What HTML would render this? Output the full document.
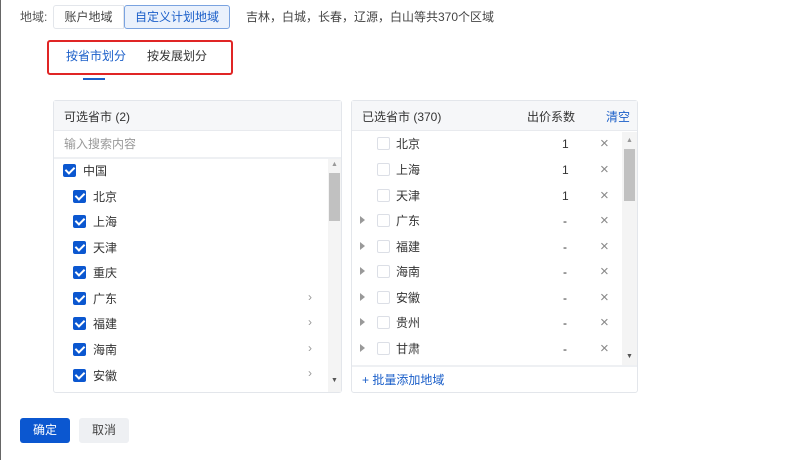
<!DOCTYPE html>
<html><head><meta charset="utf-8"><style>
*{margin:0;padding:0;box-sizing:border-box}
body{width:800px;height:460px;background:#fff;font-family:"Liberation Sans","Noto Sans CJK SC",sans-serif;font-size:12px;line-height:1.2;color:#333;position:relative;overflow:hidden}
.a{position:absolute;white-space:nowrap}
.cb{position:absolute;width:13px;height:13px;border-radius:2px;background:#0b57d0}
.cb::after{content:"";position:absolute;left:4px;top:1px;width:4px;height:7px;border:solid #fff;border-width:0 2px 2px 0;transform:rotate(45deg)}
.ecb{position:absolute;width:13px;height:13px;border:1px solid #dcdfe6;border-radius:2px;background:#fff}
.panel{position:absolute;border:1px solid #e3e6eb;border-radius:3px;background:#fff}
.hd{position:absolute;left:0;right:0;top:0;height:30px;background:#f6f7f9;border-bottom:1px solid #e8eaee}
.tri{position:absolute;width:0;height:0;border-left:5px solid #999;border-top:4px solid transparent;border-bottom:4px solid transparent}
.x{position:absolute;color:#888;font-size:15px;line-height:1}
</style></head><body>
<div class="a" style="left:0;top:0;width:1px;height:460px;background:#666"></div>
<div class="a" style="left:20px;top:10px;color:#555">地域:</div>
<div class="a" style="left:53px;top:5px;width:71px;height:24px;border:1px solid #e3e6eb;border-radius:3px 0 0 3px;text-align:center;line-height:22px;color:#444">账户地域</div>
<div class="a" style="left:124px;top:5px;width:106px;height:24px;border:1px solid #7aa3e0;background:#eaf1fc;border-radius:3px;text-align:center;line-height:22px;color:#1b5fc9">自定义计划地域</div>
<div class="a" style="left:246px;top:10px;color:#444">吉林，白城，长春，辽源，白山等共370个区域</div>
<div class="a" style="left:47px;top:40px;width:186px;height:35px;border:2px solid #e02525;border-radius:3px"></div>
<div class="a" style="left:66px;top:49px;color:#1b5fc9">按省市划分</div>
<div class="a" style="left:147px;top:49px;color:#333">按发展划分</div>
<div class="a" style="left:83px;top:78px;width:22px;height:2px;background:#1b5fc9"></div>

<div class="panel" style="left:53px;top:100px;width:289px;height:293px">
<div class="hd"></div>
<div class="a" style="left:10px;top:9px">可选省市 (2)</div>
<div class="a" style="left:10px;top:36px;color:#999">输入搜索内容</div>
<div class="a" style="left:0;right:0;top:56px;height:2px;background:#eef0f3"></div>
<div class="a" style="left:274px;top:58px;width:13px;height:233px;background:#f4f4f4"></div>
<div class="a" style="left:275px;top:72px;width:11px;height:48px;background:#c1c1c1"></div>
<div class="a" style="left:277px;top:60px;font-size:7px;color:#999">▲</div>
<div class="a" style="left:277px;top:276px;font-size:7px;color:#555">▼</div>
</div>
<div class="cb" style="left:63px;top:164px"></div><div class="a" style="left:83px;top:164px">中国</div>
<div class="cb" style="left:73px;top:190px"></div><div class="a" style="left:93px;top:190px">北京</div>
<div class="cb" style="left:73px;top:215px"></div><div class="a" style="left:93px;top:215px">上海</div>
<div class="cb" style="left:73px;top:241px"></div><div class="a" style="left:93px;top:241px">天津</div>
<div class="cb" style="left:73px;top:266px"></div><div class="a" style="left:93px;top:266px">重庆</div>
<div class="cb" style="left:73px;top:292px"></div><div class="a" style="left:93px;top:292px">广东</div><div class="a" style="left:308px;top:290px;color:#999">›</div>
<div class="cb" style="left:73px;top:317px"></div><div class="a" style="left:93px;top:317px">福建</div><div class="a" style="left:308px;top:315px;color:#999">›</div>
<div class="cb" style="left:73px;top:343px"></div><div class="a" style="left:93px;top:343px">海南</div><div class="a" style="left:308px;top:341px;color:#999">›</div>
<div class="cb" style="left:73px;top:369px"></div><div class="a" style="left:93px;top:369px">安徽</div><div class="a" style="left:308px;top:366px;color:#999">›</div>

<div class="panel" style="left:351px;top:100px;width:287px;height:293px">
<div class="hd"></div>
<div class="a" style="left:10px;top:9px">已选省市 (370)</div>
<div class="a" style="left:175px;top:9px">出价系数</div>
<div class="a" style="left:254px;top:9px;color:#1b5fc9">清空</div>
<div class="a" style="left:270px;top:31px;width:15px;height:233px;background:#f4f4f4"></div>
<div class="a" style="left:272px;top:48px;width:11px;height:52px;background:#c1c1c1"></div>
<div class="a" style="left:274px;top:36px;font-size:7px;color:#999">▲</div>
<div class="a" style="left:274px;top:252px;font-size:7px;color:#555">▼</div>
<div class="a" style="left:0;right:0;top:264px;height:2px;background:#eef0f3"></div>
<div class="a" style="left:10px;top:272px;color:#1b5fc9">+ 批量添加地域</div>
</div>
<div class="ecb" style="left:377px;top:137px"></div><div class="a" style="left:396px;top:137px">北京</div><div class="a" style="left:562px;top:137px">1</div><div class="x" style="left:600px;top:136px">×</div>
<div class="ecb" style="left:377px;top:163px"></div><div class="a" style="left:396px;top:163px">上海</div><div class="a" style="left:562px;top:163px">1</div><div class="x" style="left:600px;top:162px">×</div>
<div class="ecb" style="left:377px;top:189px"></div><div class="a" style="left:396px;top:189px">天津</div><div class="a" style="left:562px;top:189px">1</div><div class="x" style="left:600px;top:188px">×</div>
<div class="tri" style="left:360px;top:216px"></div><div class="ecb" style="left:377px;top:214px"></div><div class="a" style="left:396px;top:214px">广东</div><div class="a" style="left:563px;top:214px">-</div><div class="x" style="left:600px;top:213px">×</div>
<div class="tri" style="left:360px;top:242px"></div><div class="ecb" style="left:377px;top:240px"></div><div class="a" style="left:396px;top:240px">福建</div><div class="a" style="left:563px;top:240px">-</div><div class="x" style="left:600px;top:239px">×</div>
<div class="tri" style="left:360px;top:267px"></div><div class="ecb" style="left:377px;top:265px"></div><div class="a" style="left:396px;top:265px">海南</div><div class="a" style="left:563px;top:265px">-</div><div class="x" style="left:600px;top:264px">×</div>
<div class="tri" style="left:360px;top:293px"></div><div class="ecb" style="left:377px;top:291px"></div><div class="a" style="left:396px;top:291px">安徽</div><div class="a" style="left:563px;top:291px">-</div><div class="x" style="left:600px;top:290px">×</div>
<div class="tri" style="left:360px;top:318px"></div><div class="ecb" style="left:377px;top:316px"></div><div class="a" style="left:396px;top:316px">贵州</div><div class="a" style="left:563px;top:316px">-</div><div class="x" style="left:600px;top:315px">×</div>
<div class="tri" style="left:360px;top:344px"></div><div class="ecb" style="left:377px;top:342px"></div><div class="a" style="left:396px;top:342px">甘肃</div><div class="a" style="left:563px;top:342px">-</div><div class="x" style="left:600px;top:341px">×</div>

<div class="a" style="left:20px;top:418px;width:50px;height:25px;background:#0b57d0;border-radius:3px;color:#fff;text-align:center;line-height:25px">确定</div>
<div class="a" style="left:79px;top:418px;width:50px;height:25px;background:#eef0f3;border-radius:3px;color:#444;text-align:center;line-height:25px">取消</div>
</body></html>
